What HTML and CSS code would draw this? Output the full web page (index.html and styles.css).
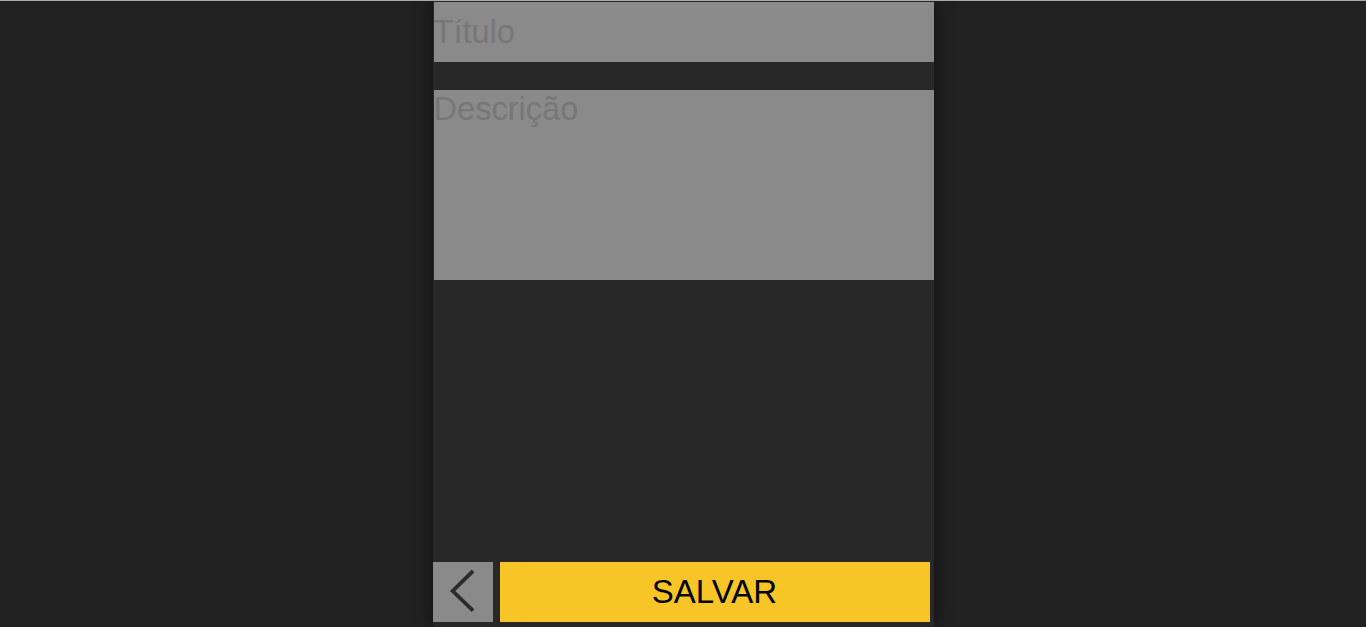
FILE: index.html
```html
<!DOCTYPE html>
<html lang="pt">
<head>
<meta charset="utf-8">
<title>Nova nota</title>
<link rel="stylesheet" href="styles.css">
</head>
<body>
<main class="panel">
  <form class="note-form">
    <input class="field field-title" type="text" placeholder="Título">
    <textarea class="field field-desc" placeholder="Descrição"></textarea>
  </form>
  <footer class="actions">
    <button class="btn-back" type="button" aria-label="Voltar">
      <svg width="60" height="60" viewBox="0 0 60 60" aria-hidden="true">
        <polyline points="38.7,10.3 19.7,29 38.7,47.3" fill="none" stroke="#2b2b2b" stroke-width="3.8" stroke-linecap="square" stroke-linejoin="miter"/>
      </svg>
    </button>
    <button class="btn-save" type="button">SALVAR</button>
  </footer>
</main>
</body>
</html>
```
FILE: styles.css
```css
* { box-sizing: border-box; }
html, body { height: 100%; }
body {
  margin: 0;
  background: #212121;
  border-top: 1px solid #a8a8a8;
  font-family: "Liberation Sans", Arial, sans-serif;
  overflow: hidden;
}
.panel {
  width: 501px;
  height: calc(100vh - 1px);
  margin: 0 auto;
  padding-top: 1px;
  background: #282828;
  box-shadow: 0 0 14px rgba(0, 0, 0, 0.55);
  display: flex;
  flex-direction: column;
}
.note-form {
  display: flex;
  flex-direction: column;
  gap: 28px;
  flex: 1;
}
.field {
  display: block;
  margin: 0 0 0 1px;
  width: 500px;
  padding: 0;
  border: none;
  outline: none;
  background: #8a8a8a;
  color: #333;
  font-family: "Liberation Sans", Arial, sans-serif;
  font-size: 32.6px;
}
.field::placeholder { color: #777; opacity: 1; }
.field-title { height: 60px; }
.field-desc { height: 190px; resize: none; line-height: normal; }
.actions {
  display: flex;
  gap: 7px;
  height: 60px;
  margin-bottom: 5px;
}
.btn-back {
  width: 60px;
  height: 60px;
  padding: 0;
  border: none;
  background: #8a8a8a;
  display: flex;
}
.btn-save {
  width: 430px;
  height: 60px;
  padding: 0;
  border: none;
  background: #f8c526;
  color: #000;
  font-family: "Liberation Sans", Arial, sans-serif;
  font-size: 33px;
}
```
